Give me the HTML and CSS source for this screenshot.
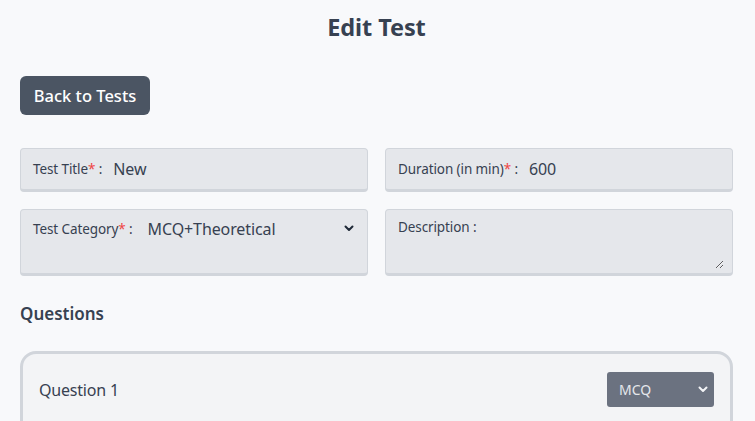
FILE: index.html
```html
<!DOCTYPE html>
<html>
<head>
<meta charset="utf-8">
<link rel="stylesheet" href="styles.css">
</head>
<body>
<div class="page">
  <h1 class="title">Edit Test</h1>
  <div class="actions"><button class="btn-back">Back to Tests</button></div>
  <div class="grid">
    <div class="field field-row1">
      <label class="lbl">Test Title<span class="req">*</span> :</label>
      <input class="inp" type="text" value="New">
    </div>
    <div class="field field-row1">
      <label class="lbl">Duration (in min)<span class="req">*</span> :</label>
      <input class="inp" type="text" value="600">
    </div>
    <div class="field field-top">
      <label class="lbl">Test Category<span class="req">*</span> :</label>
      <div class="sel-wrap">
        <select class="sel"><option>MCQ+Theoretical</option></select>
        <svg class="chev" width="10" height="7" viewBox="0 0 10 7"><path d="M1.5 1.5 L5 5 L8.5 1.5" fill="none" stroke="#1f2937" stroke-width="2" stroke-linecap="round" stroke-linejoin="round"/></svg>
      </div>
    </div>
    <div class="field field-top field-desc">
      <label class="lbl lbl-desc">Description :</label>
      <textarea class="ta" rows="2"></textarea>
    </div>
  </div>
  <h2 class="section">Questions</h2>
  <div class="qcard">
    <div class="qhead">
      <span class="qtitle">Question 1</span>
      <div class="qsel-wrap">
        <select class="qsel"><option>MCQ</option></select>
        <svg class="qchev" width="10" height="7" viewBox="0 0 10 7"><path d="M1.5 1.5 L5 5 L8.5 1.5" fill="none" stroke="#f3f4f6" stroke-width="2" stroke-linecap="round" stroke-linejoin="round"/></svg>
      </div>
    </div>
  </div>
</div>
</body>
</html>
```

FILE: styles.css
```css
* { box-sizing: border-box; }
html, body { margin: 0; padding: 0; background: #f8f9fb; }
body { font-family: "Noto Sans", "Open Sans", sans-serif; color: #374151; overflow: hidden; height: 421px; }
.page { padding: 0 22px 0 20px; }
.title { margin: 0; padding-top: 11px; font-size: 23.5px; font-weight: 700; text-align: center; line-height: 32px; color: #374151; letter-spacing: -0.1px; }
.actions { margin-top: 33px; }
.btn-back { background: #4b5563; color: #fff; border: none; border-radius: 6px; height: 39px; width: 130px; padding: 0; font-family: inherit; font-size: 16.5px; font-weight: 500; letter-spacing: 0; }
.grid { display: grid; grid-template-columns: 348px 348px; column-gap: 17px; row-gap: 17px; margin-top: 33px; }
.field { display: flex; background: #e5e7eb; border: 1px solid #d1d5db; border-bottom-width: 3px; border-radius: 4px; padding: 0 12px; }
.field-row1 { height: 44px; align-items: center; }
.field-top { height: 67px; align-items: flex-start; padding-top: 7px; }
.lbl { font-size: 13.5px; line-height: 24px; color: #374151; white-space: nowrap; letter-spacing: -0.1px; }
.lbl-desc { margin-top: -2px; }
.req { color: #ef4444; }
.inp { flex: 1; min-width: 0; background: transparent; border: none; outline: none; font-family: inherit; font-size: 16px; color: #374151; padding: 0 0 0 11px; height: 24px; letter-spacing: -0.1px; }
.sel-wrap { flex: 1; position: relative; display: flex; align-items: center; height: 24px; margin-left: 15px; }
.sel { -webkit-appearance: none; appearance: none; flex: 1; background: transparent; border: none; outline: none; font-family: inherit; font-size: 16px; color: #374151; padding: 0; height: 24px; letter-spacing: -0.1px; }
.chev { position: absolute; right: 1px; top: 8px; pointer-events: none; }
.field-desc { flex-direction: row; padding-right: 8px; }
.ta { flex: 1; align-self: stretch; margin: 0 0 4px 4px; background: transparent; border: none; outline: none; resize: vertical; font-family: inherit; font-size: 14px; }
.section { margin: 26px 0 0 0; font-size: 17px; font-weight: 600; line-height: 24px; color: #374151; }
.qcard { margin-top: 25px; background: #f3f4f6; border: 3px solid #d1d5db; border-radius: 16px; padding: 18px 16px; height: 120px; }
.qhead { display: flex; justify-content: space-between; align-items: center; }
.qtitle { font-size: 16px; color: #374151; letter-spacing: -0.2px; }
.qsel-wrap { position: relative; width: 107px; height: 35px; }
.qsel { -webkit-appearance: none; appearance: none; width: 100%; height: 100%; background: #6b7280; color: #e5e7eb; border: none; border-radius: 3px; font-family: inherit; font-size: 14px; padding: 0 12px; outline: none; }
.qchev { position: absolute; right: 6px; top: 14px; pointer-events: none; }
```
